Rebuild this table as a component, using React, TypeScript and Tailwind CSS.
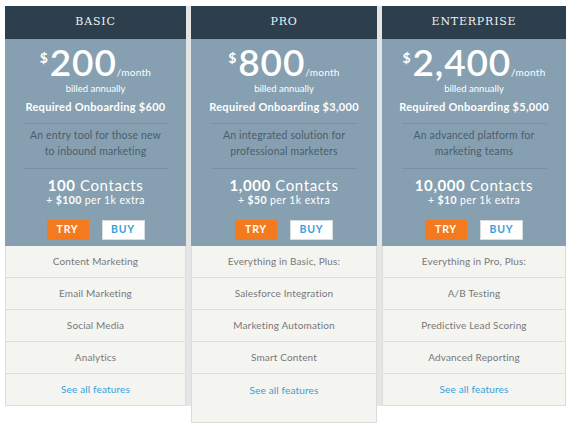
const plans = [
  {
    name: "BASIC",
    price: "200",
    onboarding: "$600",
    desc: ["An entry tool for those new", "to inbound marketing"],
    contacts: "100",
    extra: "$100",
    features: ["Content Marketing", "Email Marketing", "Social Media", "Analytics"],
  },
  {
    name: "PRO",
    price: "800",
    onboarding: "$3,000",
    desc: ["An integrated solution for", "professional marketers"],
    contacts: "1,000",
    extra: "$50",
    features: ["Everything in Basic, Plus:", "Salesforce Integration", "Marketing Automation", "Smart Content"],
  },
  {
    name: "ENTERPRISE",
    price: "2,400",
    onboarding: "$5,000",
    desc: ["An advanced platform for", "marketing teams"],
    contacts: "10,000",
    extra: "$10",
    features: ["Everything in Pro, Plus:", "A/B Testing", "Predictive Lead Scoring", "Advanced Reporting"],
  },
];

type Plan = (typeof plans)[number];

const PlanColumn = ({ plan, side }: { plan: Plan; side: "left" | "center" | "right" }) => {
  const featured = side === "center";
  return (
    <div
      className={
        "relative flex flex-col " +
        (side === "left" ? "w-[186px] pr-[5px]" : side === "right" ? "w-[189px] pl-[5px]" : "w-[186px] z-10")
      }
    >
      {/* header */}
      <div className="h-[33px] bg-[#2d3e4c] flex items-center justify-center">
        <span className="font-['DejaVu_Serif',serif] text-[11px] tracking-[0.8px] text-[#eef2f4]">{plan.name}</span>
      </div>

      {/* blue body */}
      <div className="h-[207px] bg-[#86a0b1] flex flex-col items-center text-white">
        <div className="flex items-baseline justify-center pt-[4px]">
          <span className="text-[14px] leading-none font-bold self-start mt-[8px] mr-[2px]">$</span>
          <span className="text-[37px] leading-none font-semibold tracking-[0.8px]">{plan.price}</span>
          <span className="text-[10px] leading-none tracking-[0.3px]">/month</span>
        </div>
        <div className="h-[12px] mt-[3px] text-[9.5px] leading-[12px]">billed annually</div>
        <div className="h-[14px] mt-[5px] text-[11px] font-bold leading-[14px] tracking-[0.3px]">
          Required Onboarding {plan.onboarding}
        </div>
        <div className="w-[145px] h-px bg-[#7890a1] mt-[9px]" />
        <div className="mt-[3px] text-[10.5px] leading-[16px] tracking-[0.15px] text-[#4a5e6c] text-center">
          <div>{plan.desc[0]}</div>
          <div>{plan.desc[1]}</div>
        </div>
        <div className="w-[145px] h-px bg-[#7890a1] mt-[9px]" />
        <div className="mt-[7px] text-[15px] leading-[18px] tracking-[0.6px]">
          <span className="font-bold">{plan.contacts}</span> Contacts
        </div>
        <div className="text-[10.5px] leading-[12px] tracking-[0.4px]">
          + <span className="font-bold">{plan.extra}</span> per 1k extra
        </div>
        <div className="mt-[14px] flex gap-[13px]">
          <button className="w-[42px] h-[20px] bg-[#f47a20] text-[10.5px] font-bold tracking-[0.8px] text-white">TRY</button>
          <button className="w-[43px] h-[20px] bg-white border border-[#d8dde0] text-[10.5px] font-bold tracking-[0.8px] text-[#3aa1d9]">
            BUY
          </button>
        </div>
      </div>

      {/* feature rows */}
      <div className="bg-[#f4f4f1] border-x border-b border-[#dcdcd8] text-[10px] tracking-[0.15px] text-[#787878]">
        {plan.features.map((f) => (
          <div key={f} className="h-[32px] border-b border-[#dcdcd8] flex items-center justify-center">
            {f}
          </div>
        ))}
        <div className={(featured ? "h-[48px] pb-[16px]" : "h-[31px]") + " flex items-center justify-center text-[#36a0da]"}>
          See all features
        </div>
      </div>

      {/* shadow cast by the featured column */}
      {side === "left" && <div className="absolute top-0 bottom-0 right-0 w-[5px] bg-black/10" />}
      {side === "right" && <div className="absolute top-0 bottom-0 left-0 w-[5px] bg-black/10" />}
    </div>
  );
};

export default function App() {
  return (
    <div className="w-[572px] h-[431px] bg-white pl-[5px] pt-[6px] font-['Lato',sans-serif]">
      <div className="flex items-start">
        <PlanColumn plan={plans[0]} side="left" />
        <PlanColumn plan={plans[1]} side="center" />
        <PlanColumn plan={plans[2]} side="right" />
      </div>
    </div>
  );
}
